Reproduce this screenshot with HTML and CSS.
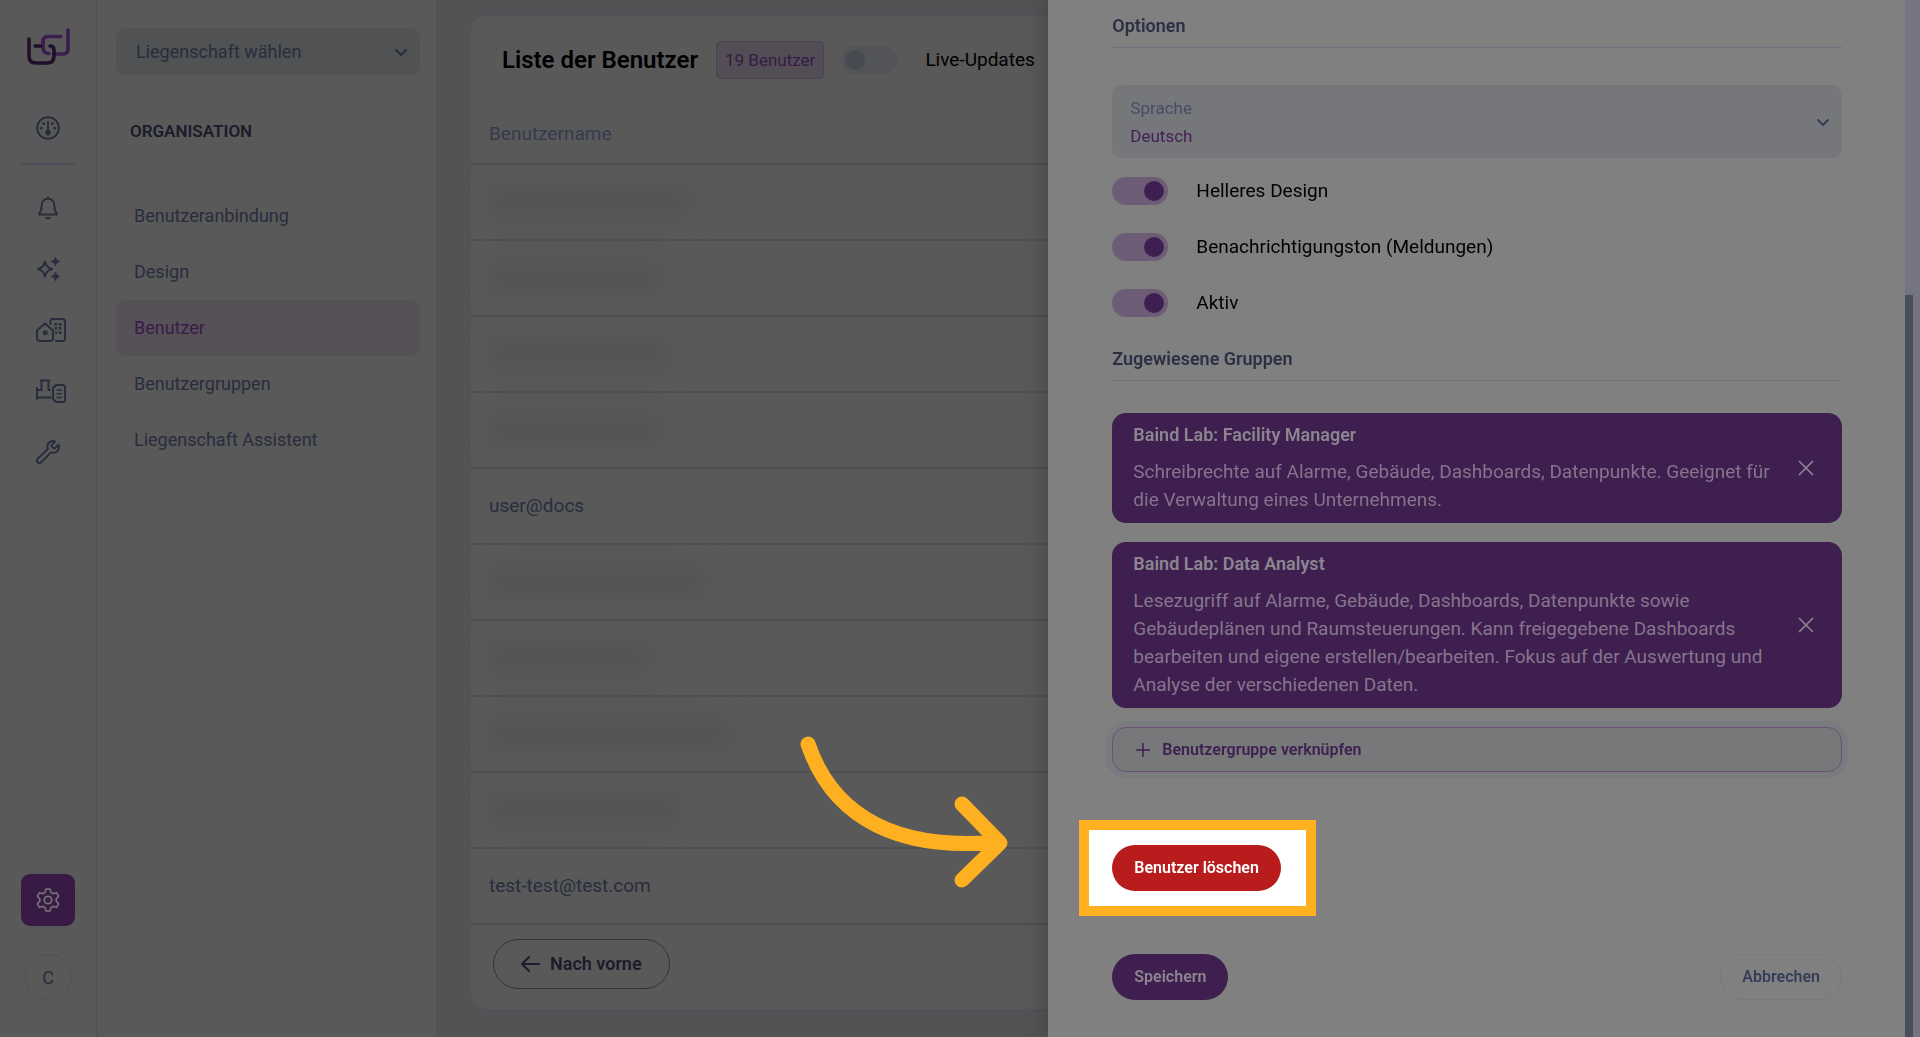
FILE: index.html
```
<!DOCTYPE html>
<html lang="de">
<head>
    <meta charset="UTF-8">
    <meta name="viewport" content="width=device-width, initial-scale=1.0">
    <title>Liste der Benutzer</title>
    <link rel="stylesheet" href="styles.css">
</head>
<body>
    <div class="app">
        <nav class="rail" aria-label="Hauptnavigation">
            <a class="logo" href="#" aria-label="Start">
                <svg width="44" height="38" viewBox="0 0 44 38" fill="none" stroke-width="3.6" stroke-linecap="round" stroke-linejoin="round">
                    <path class="logo-light" d="M35 9.500H22q-5 0-5 5v6q0 6 6 6M30 27h7q5 0 5-5V3"/>
                    <path class="logo-dark" d="M3 12v17q0 7 7 7h11q7 0 7-7v-6q0-4-4-4M9 19h6"/>
                </svg>
            </a>
            <a class="rail-link" href="#" aria-label="Dashboard">
                <svg width="24" height="24" viewBox="0 0 24 24" fill="none" stroke="currentColor" stroke-width="2">
                    <circle cx="12" cy="12" r="10.8"/>
                    <path d="M12 5v11"/>
                    <g fill="currentColor" stroke="none">
                        <circle cx="12" cy="16.6" r="2.8"/>
                        <circle cx="7.7" cy="7.7" r="1.4"/>
                        <circle cx="16.3" cy="7.7" r="1.4"/>
                        <circle cx="5.4" cy="12.2" r="1.4"/>
                        <circle cx="18.6" cy="12.2" r="1.4"/>
                    </g>
                </svg>
            </a>
            <hr class="rail-line">
            <a class="rail-link" href="#" aria-label="Meldungen">
                <svg width="24" height="24" viewBox="0 0 24 24" fill="none" stroke="currentColor" stroke-width="2" stroke-linejoin="round" stroke-linecap="round">
                    <path d="M12 1.200v1.600M12 2.800c-4 0-6.300 2.900-6.300 6.600 0 4.200-1 6.300-2.700 9.100h18c-1.700-2.800-2.700-4.900-2.700-9.100 0-3.700-2.300-6.600-6.300-6.600z"/>
                    <path d="M9 21h6c-.5 1.600-1.600 2.500-3 2.500s-2.500-.9-3-2.500z" fill="currentColor" stroke="none"/>
                </svg>
            </a>
            <a class="rail-link" href="#" aria-label="Assistent">
                <svg width="24" height="24" viewBox="0 0 24 24" fill="currentColor">
                    <path d="M9 4.500c1 4.500 2.500 6.200 7 7.500-4.500 1.300-6 3-7 7.500-1-4.500-2.500-6.200-7-7.500 4.500-1.300 6-3 7-7.500z" fill="none" stroke="currentColor" stroke-width="2.200" stroke-linejoin="round"/>
                    <path d="M19.500 0c.7 2.600 1.900 3.800 4.500 4.500-2.600.7-3.800 1.900-4.500 4.500-.7-2.600-1.900-3.800-4.500-4.500 2.600-.7 3.800-1.900 4.500-4.500zM19.500 15c.7 2.600 1.900 3.800 4.500 4.500-2.600.7-3.800 1.900-4.500 4.500-.7-2.600-1.900-3.800-4.500-4.500 2.600-.7 3.800-1.900 4.500-4.500z" stroke="currentColor" stroke-width=".6"/>
                </svg>
            </a>
            <a class="rail-link" href="#" aria-label="Gebäude">
                <svg width="30" height="24" viewBox="0 0 30 24" fill="none" stroke="currentColor" stroke-width="2" stroke-linejoin="round" stroke-linecap="round">
                    <path d="M1 12.500L9 5.500l8 7V20q0 3-3 3H4q-3 0-3-3z"/>
                    <path d="M14.500 6V3q0-2 2-2h10q2.500 0 2.500 2.500v17q0 2.500-2.500 2.500H20"/>
                    <g fill="currentColor" stroke="none">
                        <rect x="7" y="12.500" width="4.500" height="4.500" rx="1"/>
                        <path d="M18 5h3v2.500h-3zM22.500 5h3v2.500h-3zM18.500 9h2.500v2.500h-2.500zM22.500 9h3v2.500h-3zM19 13.500h2v2.500h-2zM22.500 13.500h3v2.500h-3z"/>
                    </g>
                </svg>
            </a>
            <a class="rail-link" href="#" aria-label="Anlagen">
                <svg width="30" height="24" viewBox="0 0 30 24" fill="none" stroke="currentColor" stroke-width="2" stroke-linejoin="round" stroke-linecap="round">
                    <path d="M4.500 1.500h9M5.500 1.500V11H1M1 9v11M12.500 1.500V11H14M1 18.500h13.500"/>
                    <path d="M20 6h6.500q2.500 0 2.500 2.500v12q0 2.500-2.500 2.500H20l-3-3V9z"/>
                    <path d="M21 11h4.500M21 14.800h4.500M21 18.600h4.500" stroke-width="1.500"/>
                </svg>
            </a>
            <a class="rail-link" href="#" aria-label="Werkzeuge">
                <svg width="24" height="24" viewBox="0 0 24 24" fill="none" stroke="currentColor" stroke-width="2" stroke-linejoin="round">
                    <path d="M19 1.600c-3.500-1.500-7.600.8-7.600 4.900 0 1 .1 1.600.4 2.500L1.900 18.500c-1.200 1.200-1.200 2.700-.2 3.700s2.600 1 3.800-.2L15 12.400c4.500 1.500 8-1.500 8-5.400 0-.8-.1-1.500-.4-2.300l-3.700 3.700-2.500-.8-.8-2.500z"/>
                </svg>
            </a>
            <a class="rail-settings" href="#" aria-label="Einstellungen">
                <svg width="24" height="24" viewBox="0 0 24 24" fill="none" stroke="currentColor" stroke-width="1.700" stroke-linejoin="round">
                    <circle cx="12" cy="12" r="3.700"/>
                    <path d="M10 1h4l1 3.400 2.200 1.200 3.400-.9 2 3.500L20.200 11v2l2.400 2.800-2 3.500-3.400-.9-2.200 1.200L14 23h-4l-1-3.400-2.200-1.200-3.400.9-2-3.500L3.800 13v-2L1.400 8.200l2-3.500 3.400.9L9 4.400z"/>
                </svg>
            </a>
            <button class="avatar" type="button">C</button>
        </nav>

        <aside class="sidebar">
            <div class="property">
                <select class="property-select" aria-label="Liegenschaft">
                    <option>Liegenschaft wählen</option>
                </select>
                <svg class="chevron" width="14" height="14" viewBox="0 0 14 14"><path d="M2 5l5 5 5-5"/></svg>
            </div>
            <h2 class="sidebar-title">ORGANISATION</h2>
            <ul class="menu">
                <li><a href="#">Benutzeranbindung</a></li>
                <li><a href="#">Design</a></li>
                <li><a class="active" href="#">Benutzer</a></li>
                <li><a href="#">Benutzergruppen</a></li>
                <li><a href="#">Liegenschaft Assistent</a></li>
            </ul>
        </aside>

        <main class="main">
            <section class="card">
                <header class="card-header">
                    <h1>Liste der Benutzer</h1>
                    <span class="badge">19 Benutzer</span>
                    <label class="switch-row">
                        <input class="switch" type="checkbox">
                        <span>Live-Updates</span>
                    </label>
                </header>
                <table class="users">
                    <thead>
                        <tr><th scope="col">Benutzername</th></tr>
                    </thead>
                    <tbody>
                        <tr><td><span class="masked w-200"></span></td></tr>
                        <tr><td><span class="masked w-170"></span></td></tr>
                        <tr><td><span class="masked w-180"></span></td></tr>
                        <tr><td><span class="masked w-170"></span></td></tr>
                        <tr><td>user@docs</td></tr>
                        <tr><td><span class="masked w-215"></span></td></tr>
                        <tr><td><span class="masked w-160"></span></td></tr>
                        <tr><td><span class="masked w-240"></span></td></tr>
                        <tr><td><span class="masked w-190"></span></td></tr>
                        <tr><td>test-test@test.com</td></tr>
                    </tbody>
                </table>
                <footer class="card-footer">
                    <button class="btn-prev" type="button">
                        <svg width="20" height="20" viewBox="0 0 20 20" fill="none" stroke="currentColor" stroke-width="2" stroke-linecap="round" stroke-linejoin="round"><path d="M18 10H1M8 3l-7 7 7 7"/></svg>
                        Nach vorne
                    </button>
                </footer>
            </section>
        </main>
    </div>

    <div class="drawer">
        <form class="drawer-form">
            <h3>Optionen</h3>
            <div class="language">
                <label for="language">Sprache</label>
                <select id="language">
                    <option>Deutsch</option>
                </select>
                <svg class="chevron" width="14" height="14" viewBox="0 0 14 14"><path d="M2 5l5 5 5-5"/></svg>
            </div>
            <div class="switches">
                <label class="switch-row">
                    <input class="switch" type="checkbox" checked>
                    <span>Helleres Design</span>
                </label>
                <label class="switch-row">
                    <input class="switch" type="checkbox" checked>
                    <span>Benachrichtigungston (Meldungen)</span>
                </label>
                <label class="switch-row">
                    <input class="switch" type="checkbox" checked>
                    <span>Aktiv</span>
                </label>
            </div>

            <h3>Zugewiesene Gruppen</h3>
            <div class="groups">
                <article class="group">
                    <div class="group-text">
                        <h4>Baind Lab: Facility Manager</h4>
                        <p>Schreibrechte auf Alarme, Gebäude, Dashboards, Datenpunkte. Geeignet für die Verwaltung eines Unternehmens.</p>
                    </div>
                    <button class="group-remove" type="button" aria-label="Gruppe entfernen">
                        <svg width="16" height="16" viewBox="0 0 16 16"><path d="M1 1l14 14M15 1L1 15"/></svg>
                    </button>
                </article>
                <article class="group">
                    <div class="group-text">
                        <h4>Baind Lab: Data Analyst</h4>
                        <p>Lesezugriff auf Alarme, Gebäude, Dashboards, Datenpunkte sowie Gebäudeplänen und Raumsteuerungen. Kann freigegebene Dashboards bearbeiten und eigene erstellen/bearbeiten. Fokus auf der Auswertung und Analyse der verschiedenen Daten.</p>
                    </div>
                    <button class="group-remove" type="button" aria-label="Gruppe entfernen">
                        <svg width="16" height="16" viewBox="0 0 16 16"><path d="M1 1l14 14M15 1L1 15"/></svg>
                    </button>
                </article>
                <button class="btn-link-group" type="button">
                    <svg width="14" height="14" viewBox="0 0 14 14" fill="none" stroke="currentColor" stroke-width="1.500"><path d="M7 0v14M0 7h14"/></svg>
                    Benutzergruppe verknüpfen
                </button>
            </div>

            <div class="highlight">
                <button class="btn btn-delete" type="button">Benutzer löschen</button>
            </div>

            <div class="actions">
                <button class="btn btn-save" type="submit">Speichern</button>
                <button class="btn btn-cancel" type="button">Abbrechen</button>
            </div>
        </form>
        <div class="scroll-track"><div class="scroll-thumb"></div></div>

        <!-- Arrow pointing at the delete button -->
        <svg class="arrow" width="220" height="160" viewBox="0 0 220 160">
            <path d="M16 13C36 72 88 122 206 111M170 73l38 39-38 37"/>
        </svg>
    </div>
</body>
</html>
```

FILE: styles.css
```
* {
    margin: 0;
    padding: 0;
    box-sizing: border-box;
}

:root {
    --surface: #595959;
    --page: #525355;
    --line: #4a5057;
    --text: #282d3d;
    --dark: #1b1b2a;
    --purple: #371b45;
    --drawer: #808080;
    --drawer-purple: #3e1f50;
    --drawer-text: #2c3045;
    --orange: #ffb020;
}

body {
    font-family: Roboto, "Liberation Sans", sans-serif;
    font-size: 18px;
    line-height: 28px;
    color: var(--text);
    background: var(--page);
    overflow: hidden;
}

a {
    color: inherit;
    text-decoration: none;
}

button,
select {
    font: inherit;
    color: inherit;
    cursor: pointer;
}

ul {
    list-style: none;
}

.app {
    display: flex;
    height: 100vh;
}

/* Icon rail */
.rail {
    display: flex;
    flex-direction: column;
    align-items: center;
    width: 97px;
    padding: 27px 0 36px;
    background: var(--surface);
    border-right: 1px solid var(--line);
}

.logo {
    height: 38px;
    margin-bottom: 51px;
}

.logo-light {
    stroke: #3d1d4f;
}

.logo-dark {
    stroke: #1f0f2b;
}

.rail-link {
    display: flex;
    width: 24px;
    height: 24px;
    margin-bottom: 37px;
}

.rail-link svg {
    flex: none;
}

.rail-line {
    width: 54px;
    height: 2px;
    margin: -14px 0 31px;
    border: none;
    background: var(--line);
}

.rail-settings {
    display: flex;
    align-items: center;
    justify-content: center;
    width: 54px;
    height: 52px;
    margin-top: auto;
    margin-bottom: 28px;
    border-radius: 9px;
    color: #78727c;
    background: var(--purple);
}

.avatar {
    width: 47px;
    height: 47px;
    border: 1px solid #525252;
    border-radius: 50%;
    background: none;
}

/* Sidebar */
.sidebar {
    width: 340px;
    padding: 28px 16px 0 19px;
    background: var(--surface);
    border-right: 1px solid #4e5157;
}

.property,
.language {
    position: relative;
}

.chevron {
    position: absolute;
    top: 50%;
    right: 12px;
    margin-top: -7px;
    fill: none;
    stroke: currentColor;
    stroke-width: 2;
    stroke-linecap: round;
    stroke-linejoin: round;
    pointer-events: none;
}

.property-select {
    width: 100%;
    height: 47px;
    padding: 0 20px;
    border: none;
    border-radius: 9px;
    appearance: none;
    background: #515254;
}

.sidebar-title {
    margin: 42px 14px 43px;
    font-size: 17px;
    font-weight: 600;
    color: var(--dark);
}

.menu a {
    display: block;
    padding: 14px 18px;
    border-radius: 9px;
}

.menu .active {
    color: #3b1a4b;
    background: #555157;
}

/* User list */
.main {
    flex: 1;
    padding: 16px 16px 28px 34px;
}

.card {
    height: 100%;
    border-radius: 14px;
    background: var(--surface);
    outline: 1px solid #505257;
}

.card-header {
    display: flex;
    align-items: center;
    height: 88px;
    padding: 0 31px;
}

.card-header h1 {
    font-size: 24px;
    font-weight: 600;
    color: #000;
}

.badge {
    margin: 0 17px 0 18px;
    padding: 4px 8px;
    border: 1px solid #4b4052;
    border-radius: 5px;
    font-size: 17px;
    color: #371b45;
    background: #534d56;
}

.users {
    width: 100%;
    border-collapse: collapse;
    font-size: 19px;
}

.users th,
.users td {
    height: 76px;
    padding: 0 18px;
    border-bottom: 2px solid #505050;
    text-align: left;
    font-weight: 400;
}

.users th {
    height: 60px;
    color: #343b4d;
}

.users tr:last-child td {
    border-bottom-color: #494c51;
}

.masked {
    display: block;
    height: 22px;
    background: #505255;
    filter: blur(12px);
}

.w-160 { width: 160px; }
.w-170 { width: 170px; }
.w-180 { width: 180px; }
.w-190 { width: 190px; }
.w-200 { width: 200px; }
.w-215 { width: 215px; }
.w-240 { width: 240px; }

.card-footer {
    padding: 14px 22px;
}

.btn-prev {
    display: flex;
    align-items: center;
    gap: 9px;
    height: 50px;
    padding: 0 27px;
    border: 1px solid #33323f;
    border-radius: 25px;
    font-weight: 600;
    color: var(--dark);
    background: none;
}

/* Switches */
.switch-row {
    display: flex;
    align-items: center;
    gap: 28px;
    height: 28px;
    font-size: 19px;
    color: #000;
}

.switch {
    flex: none;
    width: 56px;
    height: 28px;
    padding: 4px;
    border-radius: 14px;
    appearance: none;
    background: #535457;
    cursor: pointer;
}

.switch::before {
    content: "";
    display: block;
    width: 20px;
    height: 20px;
    border-radius: 50%;
    background: #474b51;
}

.switch:checked {
    background: #6d5c76;
}

.switch:checked::before {
    margin-left: 28px;
    background: var(--drawer-purple);
}

/* Drawer */
.drawer {
    position: fixed;
    top: 0;
    right: 0;
    bottom: 0;
    display: flex;
    width: 45.4%;
    background: var(--drawer);
    box-shadow: 0 0 24px rgba(0, 0, 0, 0.25);
}

.drawer-form {
    flex: 1;
    padding: 12px 63px 0 64px;
}

.drawer h3 {
    padding-bottom: 7px;
    border-bottom: 1px solid #6c7280;
    font-size: 18px;
    font-weight: 600;
    color: var(--drawer-text);
}

.language {
    margin: 37px 0 19px;
    color: #363c58;
}

.language label {
    position: absolute;
    top: 9px;
    left: 18px;
    font-size: 17px;
    color: #454d66;
}

.language select {
    width: 100%;
    height: 73px;
    padding: 29px 18px 0;
    border: none;
    border-radius: 9px;
    appearance: none;
    font-size: 17px;
    color: #421e56;
    background: #76777b;
}

.switches {
    display: flex;
    flex-direction: column;
    gap: 28px;
    margin-bottom: 28px;
}

.groups {
    display: flex;
    flex-direction: column;
    gap: 19px;
    margin-top: 32px;
}

.group {
    display: flex;
    align-items: center;
    gap: 20px;
    padding: 8px 28px 9px 21px;
    border-radius: 14px;
    color: #85758c;
    background: var(--drawer-purple);
}

.group-text {
    flex: 1;
    font-size: 19px;
}

.group h4 {
    margin-bottom: 9px;
    font-size: 18px;
    font-weight: 600;
    color: #8c8590;
}

.group-remove {
    display: flex;
    border: none;
    background: none;
}

.group-remove svg {
    stroke: #8c8590;
    stroke-width: 1.6;
}

.btn-link-group {
    display: flex;
    align-items: center;
    gap: 12px;
    height: 45px;
    padding: 0 23px;
    border: 1px solid #695276;
    border-radius: 14px;
    font-size: 16px;
    font-weight: 600;
    color: var(--drawer-purple);
    background: #767879;
    box-shadow: 0 0 0 6px #797b7e;
}

.highlight {
    width: fit-content;
    margin: 48px 0 38px -33px;
    padding: 15px 25px 15px 23px;
    border: 10px solid var(--orange);
    background: #fff;
}

.btn {
    display: block;
    height: 46px;
    padding: 0 21px;
    border: 1px solid transparent;
    border-radius: 23px;
    font-size: 16px;
    font-weight: 600;
}

.btn-delete {
    color: #fff;
    background: #b91c1c;
}

.btn-save {
    color: #8c8590;
    background: var(--drawer-purple);
}

.btn-cancel {
    border-color: #777880;
    color: #363c58;
    background: none;
}

.actions {
    display: flex;
    justify-content: space-between;
}

.scroll-track {
    display: flex;
    align-items: flex-end;
    width: 15px;
    background: #747580;
}

.scroll-thumb {
    width: 8px;
    height: 71.6%;
    background: #474e5c;
}

.arrow {
    position: absolute;
    top: 731px;
    left: -256px;
    fill: none;
    stroke: var(--orange);
    stroke-width: 15;
    stroke-linecap: round;
    stroke-linejoin: round;
}
```
